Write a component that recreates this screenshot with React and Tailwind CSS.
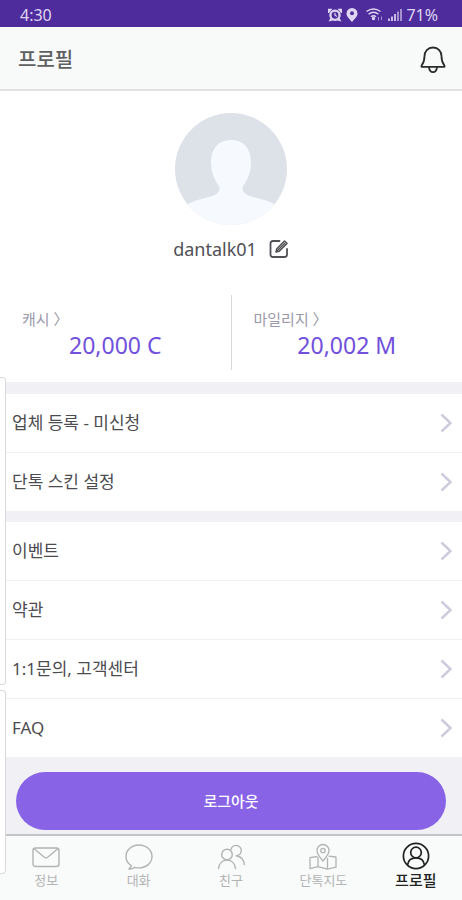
import clsx from 'clsx';

const partnerMenu = ['업체 등록 - 미신청', '단톡 스킨 설정'];
const supportMenu = ['이벤트', '약관', '1:1문의, 고객센터', 'FAQ'];

const tabs = [
  { label: '정보', Icon: MailIcon },
  { label: '대화', Icon: ChatIcon },
  { label: '친구', Icon: FriendsIcon },
  { label: '단톡지도', Icon: MapIcon },
  { label: '프로필', Icon: ProfileIcon, active: true },
];

function MailIcon() {
  return (
    <svg viewBox="0 0 28 28" className="size-7" fill="none" stroke="currentColor" strokeWidth="1.4">
      <rect x="1" y="6" width="26" height="18.500" rx="2.5" />
      <path d="M2.500 7l9.500 8q2 1.500 4 0L25.500 7" />
    </svg>
  );
}

function ChatIcon() {
  return (
    <svg viewBox="0 0 28 28" className="size-7" fill="none" stroke="currentColor" strokeWidth="1.4" strokeLinejoin="round">
      <path d="M14 3C6.800 3 1 8 1 14.500c0 4 2 7.200 5.300 9.200-.4 1.400-1.300 2.400-2.500 3.300 2.400.2 4.400-.5 6-1.700 1.300.4 2.700.6 4.200.6 7.200 0 13-5 13-11.400S21.200 3 14 3z" />
    </svg>
  );
}

function FriendsIcon() {
  return (
    <svg viewBox="0 0 28 28" className="size-7" fill="none" stroke="currentColor" strokeWidth="1.4" strokeLinecap="round">
      <circle cx="10" cy="12.500" r="5.300" />
      <path d="M1.500 26.500c.6-5 3.800-8.500 8.500-8.500s7.900 3.500 8.500 8.500" />
      <path d="M14 7.500a5.200 5.200 0 1 1 5.200 6.300" />
      <path d="M20 14c4 .8 6.800 4 7.300 8.500" />
    </svg>
  );
}

function MapIcon() {
  return (
    <svg viewBox="0 0 28 28" className="size-7" fill="none" stroke="currentColor" strokeWidth="1.3" strokeLinejoin="round">
      <path d="M14 19c-3.500-4-6-7-6-10.500a6 6 0 0 1 12 0C20 12 17.500 15 14 19z" />
      <circle cx="14" cy="8.500" r="2.200" />
      <path d="M8.500 14.500l-7.500 1.200v11l8-2 9.500 2.500 8.500-2V15l-7.500-.8" />
      <path d="M9 15v9.500M18.500 16v11" />
    </svg>
  );
}

function ProfileIcon() {
  return (
    <svg viewBox="0 0 28 28" className="size-7" fill="none" stroke="currentColor" strokeWidth="1.700">
      <circle cx="14" cy="14" r="12.600" />
      <circle cx="14" cy="10.500" r="5.300" />
      <path d="M5.500 23c.6-4.500 4-7.200 8.500-7.200s7.900 2.700 8.500 7.200" />
    </svg>
  );
}

function BellIcon() {
  return (
    <svg viewBox="0 0 26 28" className="h-7 w-6.5" fill="none" stroke="currentColor" strokeWidth="1.800" strokeLinejoin="round">
      <path d="M13 1.500c-5.300 0-8.500 3.800-8.500 8.800 0 4.700-.8 6.500-3 9.500v1h23v-1c-2.200-3-3-4.800-3-9.500 0-5-3.200-8.800-8.500-8.800z" />
      <path d="M9 21.200c.3 3.200 1.700 5 4 5s3.700-1.800 4-5" />
    </svg>
  );
}

function EditIcon() {
  return (
    <svg viewBox="0 0 20 20" className="size-5" fill="none" stroke="currentColor" strokeWidth="1.800" strokeLinecap="round" strokeLinejoin="round">
      <path d="M10.500 2H4Q1.500 2 1.500 4.500v11Q1.500 18 4 18h11.500q2.500 0 2.500-2.500V10" />
      <path d="M7 13l.8-3.200L15.500 2l2.500 2.400-7.800 7.800z" strokeWidth="1.500" />
      <path d="M8.500 11.500l7-7" strokeWidth="1.500" />
    </svg>
  );
}

function StatusIcons() {
  return (
    <div className="flex items-center gap-1">
      <svg viewBox="0 0 14 14" className="size-3.5" fill="currentColor" fillRule="evenodd">
        <path d="M7 1.500A5.700 5.700 0 1 1 7 13 5.700 5.700 0 0 1 7 1.500zm0 2.300a3.400 3.400 0 1 0 0 6.900 3.400 3.400 0 0 0 0-6.900z" />
        <path d="M0 .8h4.500L1 5H0zM14 .8H9.500L13 5h1zM.5 13.500L2.500 10 5 12.500zM13.500 13.500l-2-3.500L9 12.500z" />
        <path d="M6.400 4.700h1.200v2.200l1.600 1-.6 1-2.200-1.400z" />
      </svg>
      <svg viewBox="0 0 12 14" className="h-3.5 w-3" fill="currentColor" fillRule="evenodd">
        <path d="M6 0a5.500 5.500 0 0 1 5.500 5.400c0 3.200-3 5.300-5.500 8.600-2.500-3.300-5.500-5.400-5.500-8.600A5.500 5.500 0 0 1 6 0zm0 3.300a2 2 0 1 0 0 4 2 2 0 0 0 0-4z" />
      </svg>
      <svg viewBox="0 0 18 14" className="ml-1 h-3.5 w-4.5" fill="none" stroke="currentColor" strokeWidth="1.400">
        <path d="M.5 3.500q7-5 14 0M2.500 6.200q5-4 10 0M5 8.700q2.500-2 5 0" />
        <circle cx="7.500" cy="10.500" r="1" fill="currentColor" />
        <path d="M12.500 9v3.500M15.500 8.500V12" strokeWidth="1" opacity=".6" />
      </svg>
      <svg viewBox="0 0 14 14" className="size-3.5" fill="currentColor">
        <path d="M0 10.500h2V13H0zM3 8.500h2V13H3zM6 6h2v7H6z" opacity=".85" />
        <path d="M9 3.500h2V13H9zM12 1h2v12h-2z" opacity=".6" />
      </svg>
    </div>
  );
}

function Avatar() {
  return (
    <svg viewBox="0 0 112 112" className="size-28" role="img" aria-label="dantalk01">
      <clipPath id="avatar-clip">
        <circle cx="56" cy="56" r="56" />
      </clipPath>
      <g clipPath="url(#avatar-clip)">
        <rect width="112" height="112" fill="#dde1e8" />
        <path
          fill="#f6f9fe"
          d="M56 27c-12 0-20 8-20 22 0 11 4 19 8 24 1.500 5-1.500 8-7 10-9 3-18 4-26 9v20h90V92c-8-5-17-6-26-9-5.500-2-8.500-5-7-10 4-5 8-13 8-24 0-14-8-22-20-22z"
        />
      </g>
    </svg>
  );
}

function Balance({ label, value }) {
  return (
    <a href="#" className="flex flex-1 flex-col px-[22px] pt-3">
      <span className="text-[15px] leading-6 text-[#9b98a8]">{label} 〉</span>
      <span className="text-center text-[23px] leading-7 text-[#7150dc]">{value}</span>
    </a>
  );
}

function MenuList({ items }) {
  return (
    <ul className="divide-y divide-[#f1f1f3] bg-white">
      {items.map((item) => (
        <li key={item}>
          <a href="#" className="flex h-[58px] items-center justify-between pr-2.5 pl-3 text-[17px] text-[#4c4b50]">
            {item}
            <svg viewBox="0 0 12 20" className="h-5 w-3" fill="none" stroke="#cdcbdc" strokeWidth="2.500">
              <path d="M1.500 1.500L10.500 10l-9 8.500" />
            </svg>
          </a>
        </li>
      ))}
    </ul>
  );
}

export default function App() {
  return (
    <div className="relative flex min-h-screen flex-col bg-[#f1f1f5] font-['Noto_Sans','Noto_Sans_CJK_KR',sans-serif]">
      <div className="flex h-[27px] items-center justify-between bg-[#4f2c9b] pt-0.5 pr-6 pl-5 text-base text-[#ded5f2]">
        <span>4:30</span>
        <div className="flex items-center gap-1">
          <StatusIcons />
          <span>71%</span>
        </div>
      </div>

      <header className="flex h-16 items-center justify-between border-b-2 border-[#e0e2e1] bg-[#f8faf9] pt-1 pr-4 pl-[18px]">
        <h1 className="text-xl font-medium text-[#5f6160]">프로필</h1>
        <button type="button" aria-label="알림" className="text-[#2b2b2b]">
          <BellIcon />
        </button>
      </header>

      <section className="bg-white pb-3">
        <div className="flex flex-col items-center pt-[22px]">
          <Avatar />
          <div className="mt-2.5 flex items-center gap-3 text-[#505055]">
            <span className="text-lg">dantalk01</span>
            <button type="button" aria-label="프로필 수정">
              <EditIcon />
            </button>
          </div>
        </div>
        <div className="mt-8 flex h-[75px] divide-x divide-[#d8d8dc]">
          <Balance label="캐시" value="20,000 C" />
          <Balance label="마일리지" value="20,002 M" />
        </div>
      </section>

      <div className="mt-3 flex flex-col gap-[11px]">
        <MenuList items={partnerMenu} />
        <MenuList items={supportMenu} />
      </div>

      <div className="px-4 pt-[15px] pb-1">
        <button type="button" className="h-[58px] w-full rounded-full bg-[#8963e6] text-[15px] font-medium text-white">
          로그아웃
        </button>
      </div>

      <nav className="mt-auto grid h-[66px] grid-cols-5 border-t-2 border-[#c3c4c6] bg-[#f9fbfa]">
        {tabs.map(({ label, Icon, active }) => (
          <a
            key={label}
            href="#"
            className={clsx(
              'flex flex-col items-center pt-1.5 leading-5',
              active ? 'text-[15px] font-medium text-[#222222]' : 'text-[13px] text-[#b2b3b4]',
            )}
          >
            <Icon />
            {label}
          </a>
        ))}
      </nav>

      {/* edge panel handles */}
      <div className="absolute top-[377px] left-0 h-[308px] w-1.5 rounded-r border border-l-0 border-[#d9d9dc] bg-white" />
      <div className="absolute top-[690px] left-0 h-[184px] w-1.5 rounded-r border border-l-0 border-[#d9d9dc] bg-white" />
    </div>
  );
}
